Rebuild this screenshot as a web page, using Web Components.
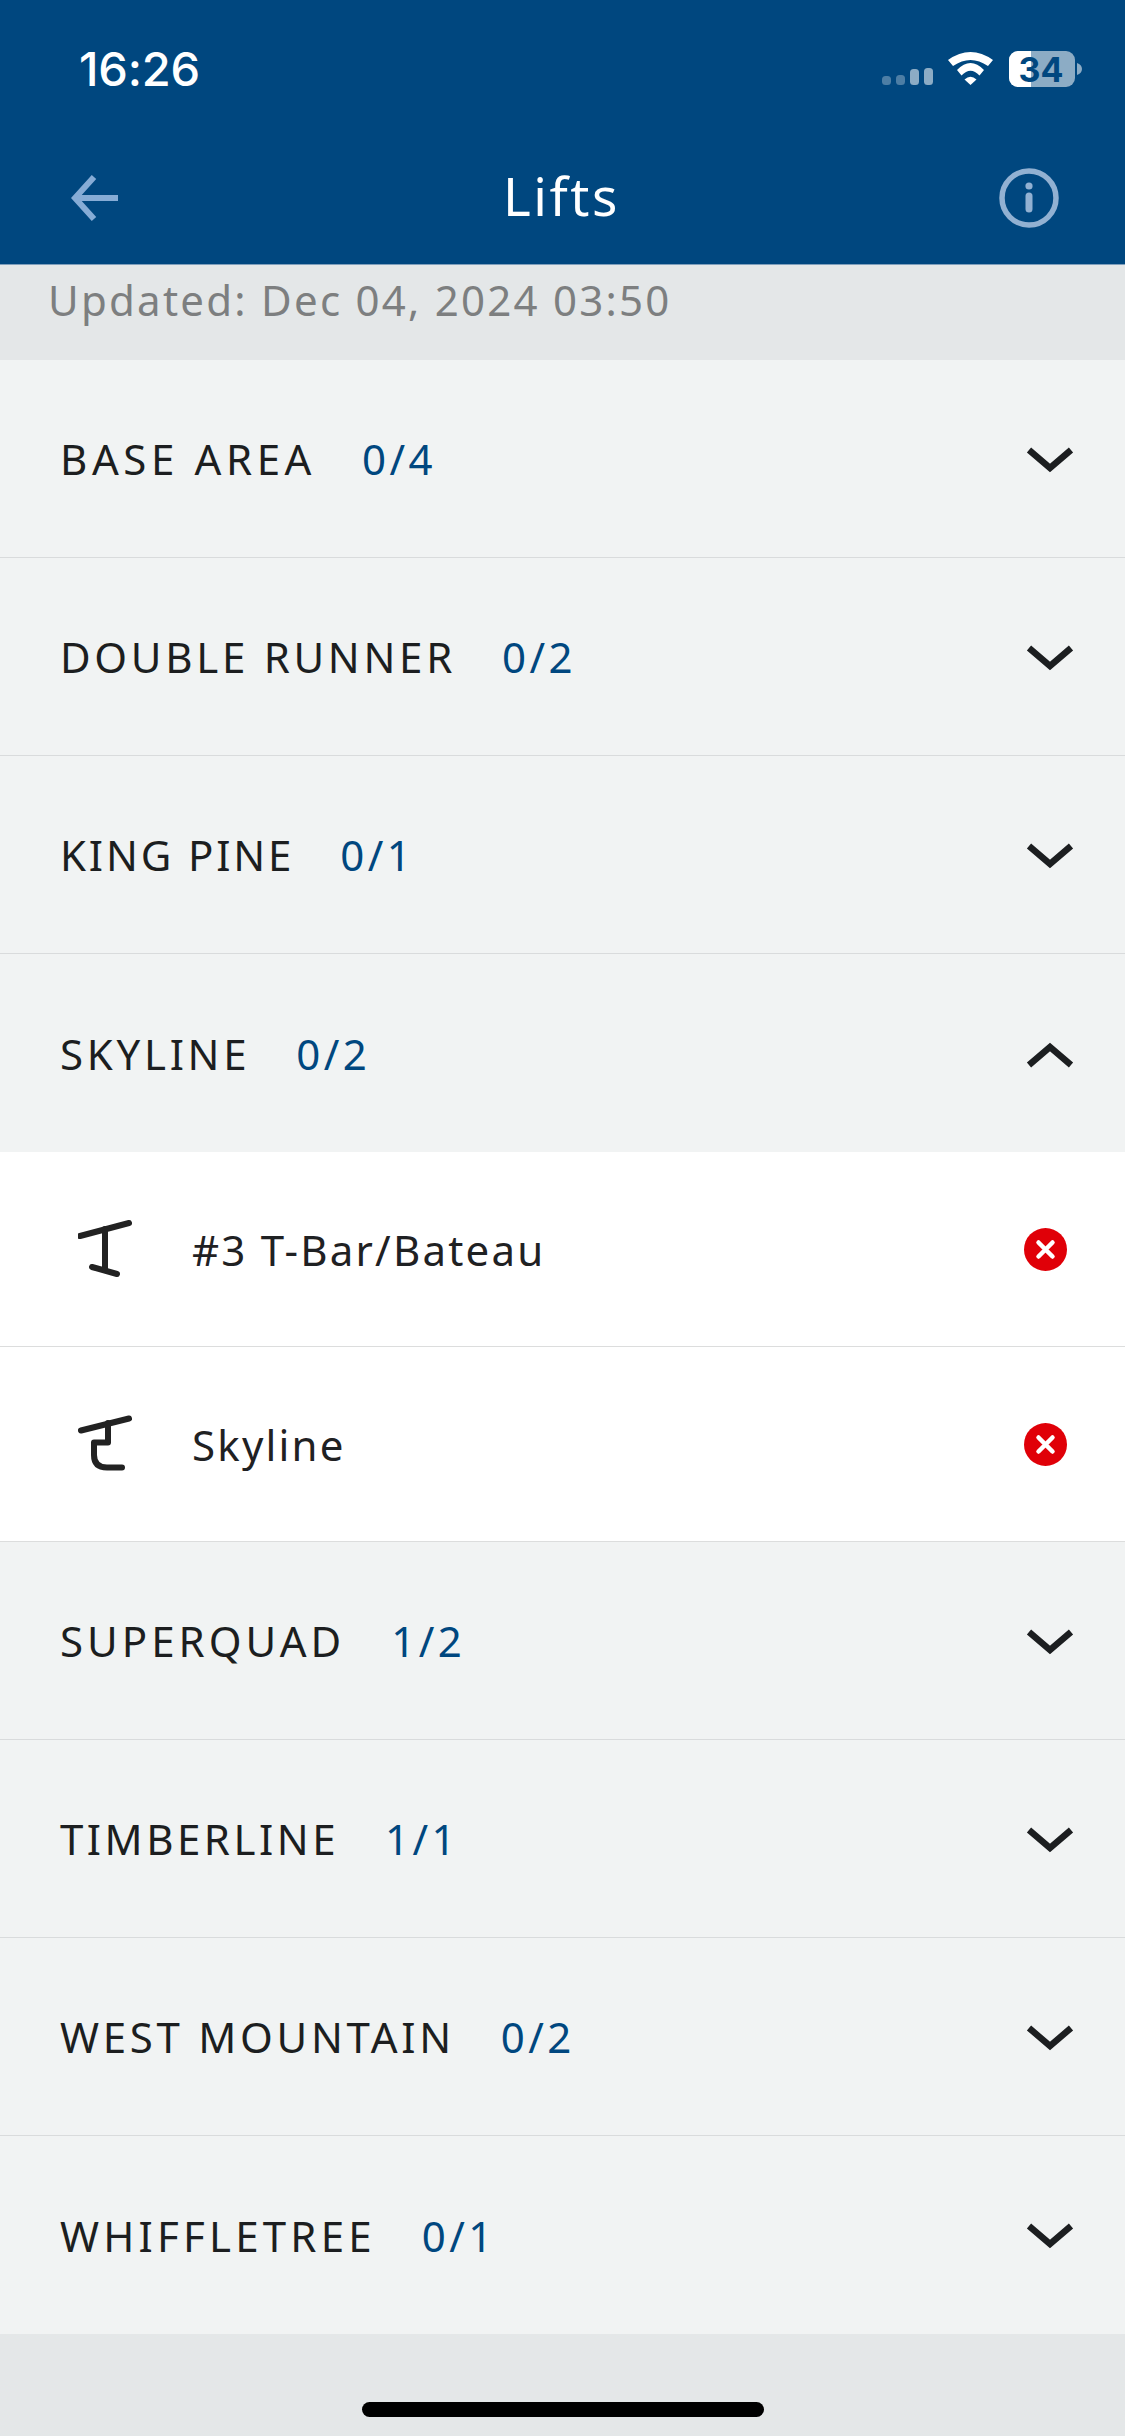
<!DOCTYPE html>
<html>
<head>
<meta charset="utf-8">
<title>Lifts</title>
<style>
    html, body { margin: 0; padding: 0; background: #e4e7e8; }
    body { width: 1125px; height: 2436px; overflow: hidden; display: flex; flex-direction: column; font-family: "Noto Sans", "Open Sans", sans-serif; }
</style>
</head>
<body>
<app-header title="Lifts"></app-header>
<updated-bar>Updated: Dec 04, 2024 03:50</updated-bar>
<lift-group name="BASE AREA" count="0/4" style="--track:4.6px"></lift-group>
<lift-group name="DOUBLE RUNNER" count="0/2" style="--track:3.7px"></lift-group>
<lift-group name="KING PINE" count="0/1" style="--track:2.85px"></lift-group>
<lift-group name="SKYLINE" count="0/2" open style="--track:3.7px">
    <lift-row name="#3 T-Bar/Bateau" kind="tbar"></lift-row>
    <lift-row name="Skyline" kind="chair"></lift-row>
</lift-group>
<lift-group name="SUPERQUAD" count="1/2" style="--track:4px"></lift-group>
<lift-group name="TIMBERLINE" count="1/1" style="--track:3.5px"></lift-group>
<lift-group name="WEST MOUNTAIN" count="0/2" style="--track:3.7px"></lift-group>
<lift-group name="WHIFFLETREE" count="0/1" last style="--track:4.2px"></lift-group>
<home-bar></home-bar>

<script>
// Top bar with status icons and page title
class AppHeader extends HTMLElement {
    constructor() {
        super();
        this.attachShadow({ mode: 'open' });
    }

    connectedCallback() {
        this.shadowRoot.innerHTML = `
            <style>
                :host {
                    display: block;
                    height: 265px;
                    box-sizing: border-box;
                    background: #00477f;
                    color: #fff;
                    border-bottom: 1px solid #7f9fbc;
                    flex: none;
                }
                .status {
                    height: 136px;
                    padding: 0 38px 0 79px;
                    display: flex;
                    align-items: center;
                    justify-content: space-between;
                    box-sizing: border-box;
                }
                .time {
                    font: 500 47px "Inter", sans-serif;
                    letter-spacing: -0.2px;
                }
                .nav {
                    height: 123px;
                    padding: 0 66px 0 71px;
                    display: flex;
                    align-items: center;
                    justify-content: space-between;
                }
                .title {
                    font-size: 53px;
                    letter-spacing: 2.6px;
                    font-weight: 400;
                    line-height: 1;
                    padding-bottom: 4px;
                    margin-left: 3px;
                }
                svg { display: block; }
            </style>
            <div class="status">
                <span class="time">16:26</span>
                <svg width="205" height="48" viewBox="0 -4 205 48">
                    <g fill="#fff">
                        <rect x="0" y="28" width="9" height="9" rx="3.5" opacity=".3"/>
                        <rect x="14" y="27" width="9" height="10" rx="3.5" opacity=".3"/>
                        <rect x="28" y="21" width="9" height="16" rx="3.5" opacity=".55"/>
                        <rect x="42" y="20" width="9" height="17" rx="3.5" opacity=".55"/>
                        <path d="M66 12 Q88.5 -4 111 12 L106 18 Q88.5 6 71 18 Z"/>
                        <path d="M75 22 Q88.5 8 102 22 L97.5 27.5 Q88.5 18 79.5 27.5 Z"/>
                        <path d="M82.5 31.5 Q88.5 26 94.5 31.5 L88.5 37 Z"/>
                        <rect x="127" y="3" width="66" height="36" rx="9" opacity=".55"/>
                        <path d="M127 12 a9 9 0 0 1 9 -9 H149 V39 H136 a9 9 0 0 1 -9 -9 Z"/>
                        <path d="M195 15 c3 1 5 3 5 6 s-2 5 -5 6 Z" opacity=".55"/>
                    </g>
                    <text x="159" y="34" text-anchor="middle" font-family="Inter, sans-serif" font-weight="700" font-size="34" fill="#00477f">34</text>
                </svg>
            </div>
            <div class="nav">
                <svg width="50" height="48" viewBox="0 0 50 48" fill="none" stroke="#86acd6" stroke-width="6">
                    <path d="M23 3 L4 24 L23 45"/>
                    <path d="M5 24 H47"/>
                </svg>
                <span class="title">${this.getAttribute('title')}</span>
                <svg width="60" height="60" viewBox="0 0 60 60" fill="none" stroke="#92b1d2" stroke-width="5.5">
                    <circle cx="30" cy="30" r="27"/>
                    <circle cx="30" cy="18" r="3.6" fill="#92b1d2" stroke="none"/>
                    <path d="M30 28 V41" stroke-width="7" stroke-linecap="round"/>
                </svg>
            </div>
        `;
    }
}

class UpdatedBar extends HTMLElement {
    constructor() {
        super();
        this.attachShadow({ mode: 'open' });
        this.shadowRoot.innerHTML = `
            <style>
                :host {
                    display: block;
                    height: 95px;
                    background: #e4e7e8;
                    color: #7d7f80;
                    font-size: 42px;
                    line-height: 70px;
                    letter-spacing: 2.25px;
                    padding-left: 48px;
                    box-sizing: border-box;
                    flex: none;
                }
            </style>
            <slot></slot>
        `;
    }
}

class LiftGroup extends HTMLElement {
    constructor() {
        super();
        this.attachShadow({ mode: 'open' });
    }

    connectedCallback() {
        const open = this.hasAttribute('open');
        const chevron = open ? 'M3 27 L24 9 L45 27' : 'M3 6 L24 24 L45 6';

        this.shadowRoot.innerHTML = `
            <style>
                :host {
                    display: block;
                    flex: none;
                }
                .head {
                    height: 198px;
                    box-sizing: border-box;
                    background: #f1f3f3;
                    display: flex;
                    align-items: center;
                    padding: 0 51px 0 60px;
                    border-bottom: ${open || this.hasAttribute('last') ? 'none' : '1px solid #d9dbdc'};
                }
                .name {
                    font-size: 42px;
                    letter-spacing: var(--track, 3.5px);
                    color: #1c1e20;
                }
                .count {
                    font-size: 42px;
                    letter-spacing: 3.4px;
                    color: #00477f;
                    margin-left: 46px;
                    flex: 1;
                }
                svg { display: block; }
            </style>
            <div class="head">
                <span class="name">${this.getAttribute('name')}</span>
                <span class="count">${this.getAttribute('count')}</span>
                <svg width="48" height="30" viewBox="0 0 48 30" fill="none" stroke="#1c1e20" stroke-width="6.5">
                    <path d="${chevron}"/>
                </svg>
            </div>
            <slot></slot>
        `;
    }
}

class LiftRow extends HTMLElement {
    constructor() {
        super();
        this.attachShadow({ mode: 'open' });
    }

    connectedCallback() {
        const icons = {
            tbar: '<path d="M2 17 L51 4"/><path d="M27 10 V50"/><path d="M14 48 L39 55"/>',
            chair: '<path d="M3 16.5 L51 4.5"/><path d="M30 9 V28.5 H16 V41 Q16 53.5 29 53.5 H44" stroke-linejoin="round"/>'
        };
        const kind = this.getAttribute('kind');

        this.shadowRoot.innerHTML = `
            <style>
                :host {
                    display: block;
                    background: #fff;
                }
                .row {
                    height: 195px;
                    box-sizing: border-box;
                    display: flex;
                    align-items: center;
                    padding: 0 58px 0 78px;
                    border-bottom: 1px solid #dcdddd;
                }
                .icon {
                    margin-right: 60px;
                    flex: none;
                }
                .name {
                    flex: 1;
                    font-size: 42px;
                    letter-spacing: 2.2px;
                    color: #1f2123;
                }
                svg { display: block; }
            </style>
            <div class="row">
                <svg class="icon" width="54" height="60" viewBox="0 0 54 60" fill="none" stroke="#222" stroke-width="6" stroke-linecap="round">
                    ${icons[kind]}
                </svg>
                <span class="name">${this.getAttribute('name')}</span>
                <svg width="43" height="43" viewBox="0 0 43 43">
                    <circle cx="21.5" cy="21.5" r="21.5" fill="#e00008"/>
                    <path d="M14.5 14.5 L28.5 28.5 M28.5 14.5 L14.5 28.5" stroke="#fff" stroke-width="4.5" stroke-linecap="round"/>
                </svg>
            </div>
        `;
    }
}

class HomeBar extends HTMLElement {
    constructor() {
        super();
        this.attachShadow({ mode: 'open' });
        this.shadowRoot.innerHTML = `
            <style>
                :host {
                    display: flex;
                    flex: 1;
                    justify-content: center;
                    background: #e4e7e8;
                    padding-top: 68px;
                }
                .bar {
                    width: 402px;
                    height: 15px;
                    border-radius: 8px;
                    background: #000;
                }
            </style>
            <div class="bar"></div>
        `;
    }
}

customElements.define('app-header', AppHeader);
customElements.define('updated-bar', UpdatedBar);
customElements.define('lift-group', LiftGroup);
customElements.define('lift-row', LiftRow);
customElements.define('home-bar', HomeBar);
</script>
</body>
</html>
